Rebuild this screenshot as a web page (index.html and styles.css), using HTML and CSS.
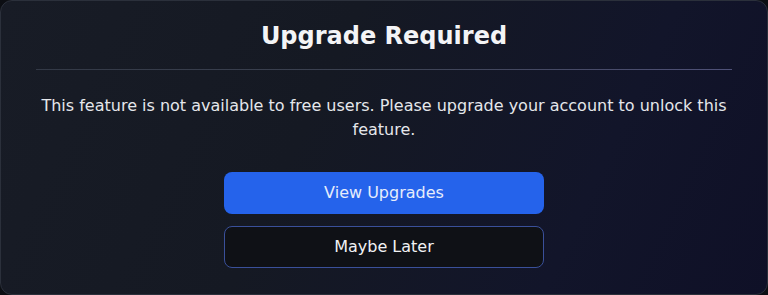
FILE: index.html
```html
<!DOCTYPE html>
<html lang="en">
<head>
<meta charset="utf-8">
<title>Upgrade Required</title>
<link rel="stylesheet" href="styles.css">
</head>
<body>
<div class="modal">
  <h2 class="title">Upgrade Required</h2>
  <div class="divider"></div>
  <p class="message">This feature is not available to free users. Please upgrade your account to unlock this feature.</p>
  <div class="actions">
    <button class="btn btn-primary">View Upgrades</button>
    <button class="btn btn-secondary">Maybe Later</button>
  </div>
</div>
</body>
</html>
```
FILE: styles.css
```css
html, body {
  margin: 0;
  padding: 0;
  background: #0c0e13;
}
body {
  font-family: "DejaVu Sans", sans-serif;
  width: 768px;
  height: 295px;
  overflow: hidden;
}
.modal {
  box-sizing: border-box;
  width: 768px;
  height: 295px;
  border: 1px solid #2b303b;
  border-radius: 12px;
  background: linear-gradient(115deg, #181c26 0%, #151923 40%, #12152a 75%, #0f1027 100%);
  padding: 19px 35px 0;
  display: flex;
  flex-direction: column;
  align-items: center;
}
.title {
  margin: 0;
  font-size: 24px;
  line-height: 32px;
  font-weight: bold;
  color: #f3f4f6;
  text-align: center;
}
.divider {
  align-self: stretch;
  height: 1px;
  margin-top: 17px;
  background: linear-gradient(to right, #333946, #3c4252 50%, #4f5178);
}
.message {
  margin: 24px 0 0;
  font-size: 16px;
  line-height: 24px;
  color: #e5e7eb;
  text-align: center;
}
.actions {
  margin-top: 30px;
  display: flex;
  flex-direction: column;
  gap: 12px;
  width: 320px;
}
.btn {
  box-sizing: border-box;
  width: 320px;
  height: 42px;
  border-radius: 8px;
  font-family: "DejaVu Sans", sans-serif;
  font-size: 16px;
  line-height: 20px;
  padding: 0 0 1px;
  cursor: pointer;
}
.btn-primary {
  background: #2563eb;
  border: none;
  color: #e6ecfb;
}
.btn-secondary {
  background: #0f1116;
  border: 1px solid #3a509a;
  color: #f1f2f4;
}
```
